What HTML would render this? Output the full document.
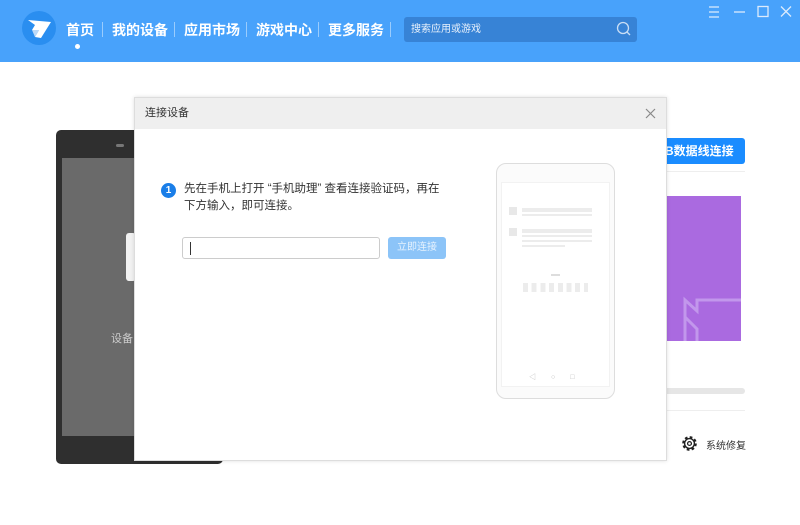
<!DOCTYPE html><html><head><meta charset="utf-8"><style>
*{margin:0;padding:0;box-sizing:border-box}
body{width:800px;height:525px;overflow:hidden;background:#fff;font-family:"Liberation Sans","Noto Sans CJK SC",sans-serif;position:relative}
.top{position:absolute;left:0;top:0;width:800px;height:62px;background:#48a2fb}
.nav{position:absolute;top:20px;color:#fff;font-size:14px;font-weight:bold}
.sep{position:absolute;top:22px;width:1px;height:15px;background:rgba(255,255,255,.45)}
.abs{position:absolute}
</style></head><body>
<div class="top">
<svg class="abs" style="left:21px;top:10px" width="36" height="36" viewBox="0 0 36 36"><circle cx="18" cy="18" r="17" fill="#2a8ef0"/><path d="M7 10 L30 12 L20 28 L14 27 L18 20 L11 20 L14 15 Z" fill="#fff"/><path d="M11 20 L18 20 L14 27 Z" fill="#bcd9f7"/></svg>
<div class="nav" style="left:66px">首页</div>
<div class="abs" style="left:75px;top:44px;width:5px;height:5px;border-radius:50%;background:#fff"></div>
<div class="sep" style="left:102px"></div>
<div class="nav" style="left:112px">我的设备</div>
<div class="sep" style="left:174px"></div>
<div class="nav" style="left:184px">应用市场</div>
<div class="sep" style="left:246px"></div>
<div class="nav" style="left:256px">游戏中心</div>
<div class="sep" style="left:318px"></div>
<div class="nav" style="left:328px">更多服务</div>
<div class="sep" style="left:390px"></div>
<div class="abs" style="left:404px;top:17px;width:233px;height:25px;background:#3783d6;border-radius:3px;color:#e8f1fc;font-size:10px;line-height:25px;padding-left:7px">搜索应用或游戏</div>
<svg class="abs" style="left:616px;top:21px" width="16" height="16" viewBox="0 0 16 16"><circle cx="7" cy="7" r="5.5" fill="none" stroke="#c9def5" stroke-width="1.3"/><path d="M11 11 L14 14" stroke="#c9def5" stroke-width="1.3"/></svg>
<svg class="abs" style="left:706px;top:5px" width="90" height="14" viewBox="0 0 90 14" stroke="#dcebfc" stroke-width="1.3" fill="none"><path d="M3 2h10M3 7h10M3 12h10"/><path d="M28 7h11"/><rect x="52" y="1.5" width="10" height="10"/><path d="M75 1.5l10 10M85 1.5l-10 10"/></svg>
</div>
<div class="abs" style="left:56px;top:130px;width:167px;height:334px;background:#2f2f2f;border-radius:5px"></div>
<div class="abs" style="left:62px;top:158px;width:160px;height:278px;background:#6a6a6a"></div>
<div class="abs" style="left:116px;top:144px;width:8px;height:3px;background:#777;border-radius:2px"></div>
<div class="abs" style="left:126px;top:233px;width:10px;height:48px;background:#f2f2f2;border-radius:3px"></div>
<div class="abs" style="left:111px;top:330px;color:#ccc;font-size:11px">设备</div>
<div class="abs" style="left:640px;top:138px;width:105px;height:26px;background:#1a8cff;border-radius:3px;color:#fff;font-size:12px;font-weight:bold;line-height:26px;padding-left:25px">B数据线连接</div>
<div class="abs" style="left:660px;top:171px;width:85px;height:1px;background:#eee"></div>
<div class="abs" style="left:660px;top:196px;width:81px;height:145px;background:#aa6ae0"></div>
<svg class="abs" style="left:683px;top:295px" width="58" height="46"><path d="M2 46 L2 5 L14 16 L14 5 L58 5" fill="none" stroke="#c297ec" stroke-width="3"/><path d="M2 22 L14 34 L14 46" fill="none" stroke="#c297ec" stroke-width="3"/></svg>
<div class="abs" style="left:660px;top:388px;width:85px;height:6px;background:#e6e6e6;border-radius:3px"></div>
<div class="abs" style="left:660px;top:410px;width:85px;height:1px;background:#eee"></div>
<svg class="abs" style="left:681px;top:435px" width="17" height="17" viewBox="0 0 16 16"><circle cx="8" cy="8" r="5.6" fill="none" stroke="#222" stroke-width="2.6" stroke-dasharray="2.4 2"/><circle cx="8" cy="8" r="4.6" fill="none" stroke="#222" stroke-width="1.3"/><circle cx="8" cy="8" r="1.8" fill="none" stroke="#222" stroke-width="1.2"/></svg>
<div class="abs" style="left:706px;top:437px;font-size:10px;color:#333">系统修复</div>
<div class="abs" style="left:134px;top:97px;width:533px;height:364px;background:#fff;border:1px solid #ddd;box-shadow:0 0 4px rgba(0,0,0,.12)">
<div style="height:31px;background:#efefef;font-size:11px;color:#333;line-height:31px;padding-left:10px">连接设备</div>
<svg class="abs" style="left:510px;top:10px" width="11" height="11"><path d="M1 1l9 9M10 1l-9 9" stroke="#888" stroke-width="1.2"/></svg>
<div class="abs" style="left:26px;top:85px;width:15px;height:15px;border-radius:50%;background:#1a7ee8;color:#fff;font-size:10px;font-weight:bold;text-align:center;line-height:15px">1</div>
<div class="abs" style="left:49px;top:83px;width:262px;font-size:11.5px;line-height:17px;color:#333">先在手机上打开 “手机助理” 查看连接验证码，再在<br>下方输入，即可连接。</div>
<div class="abs" style="left:47px;top:139px;width:198px;height:22px;border:1px solid #ccc;border-radius:3px"><div style="position:absolute;left:7px;top:4px;width:1px;height:13px;background:#333"></div></div>
<div class="abs" style="left:253px;top:139px;width:58px;height:22px;background:#8cc4f8;border-radius:3px;color:#e6f2fe;font-size:10px;text-align:center;line-height:22px">立即连接</div>
<div class="abs" style="left:361px;top:65px;width:119px;height:236px;border:1px solid #ddd;border-radius:10px;background:#fbfbfb"></div>
<div class="abs" style="left:366px;top:84px;width:109px;height:205px;background:#fff;border:1px solid #f2f2f2"></div>
<div class="abs" style="left:374px;top:109px;width:8px;height:8px;background:#e8e8e8"></div>
<div class="abs" style="left:387px;top:110px;width:70px;height:4px;background:#ececec"></div>
<div class="abs" style="left:387px;top:116px;width:70px;height:2px;background:#ececec"></div>
<div class="abs" style="left:374px;top:130px;width:8px;height:8px;background:#e8e8e8"></div>
<div class="abs" style="left:387px;top:131px;width:70px;height:4px;background:#ececec"></div>
<div class="abs" style="left:387px;top:137px;width:70px;height:2px;background:#ececec"></div>
<div class="abs" style="left:387px;top:142px;width:70px;height:2px;background:#ececec"></div>
<div class="abs" style="left:387px;top:147px;width:43px;height:2px;background:#ececec"></div>
<div class="abs" style="left:416px;top:176px;width:9px;height:2px;background:#ddd"></div>
<div class="abs" style="left:388px;top:185px;width:65px;height:9px;background:repeating-linear-gradient(90deg,#ececec 0 5px,transparent 5px 8.7px)"></div>
<div class="abs" style="left:394px;top:274px;font-size:7px;color:#bbb;letter-spacing:15px">◁○□</div>
</div>
</body></html>
